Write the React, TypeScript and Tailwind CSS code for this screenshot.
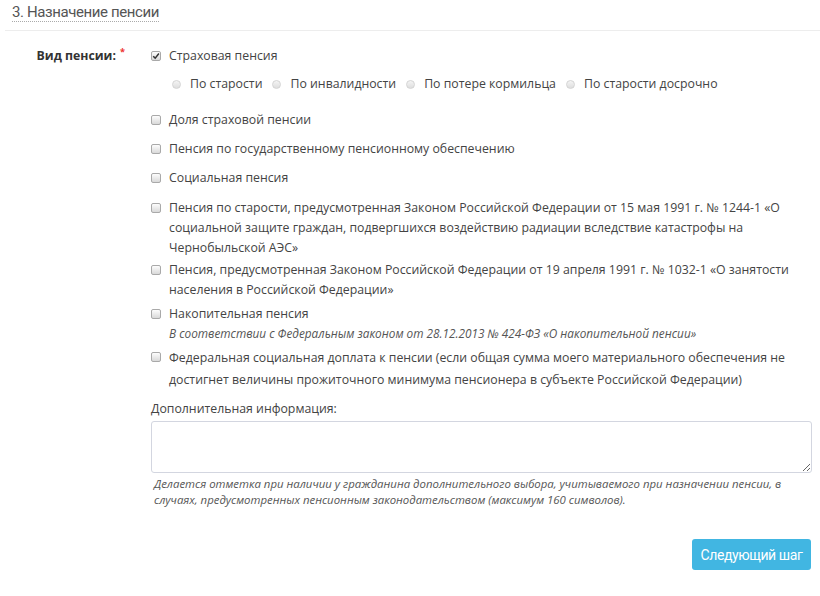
import React from 'react';

function Box({ checked = false }: { checked?: boolean }) {
  return (
    <span className="mt-[5px] flex h-[10px] w-[10px] shrink-0 items-center justify-center rounded-[2px] border border-[#a9a9a9] bg-gradient-to-b from-[#fdfdfd] to-[#d9d9d9]">
      {checked && (
        <svg viewBox="0 0 10 10" className="h-[8px] w-[8px]">
          <path d="M1.5 5.2 L4 7.6 L8.6 1.8" fill="none" stroke="#333" strokeWidth="1.8" />
        </svg>
      )}
    </span>
  );
}

function Radio({ label }: { label: string }) {
  return (
    <span className="flex items-center">
      <span className="mr-[9px] h-[9px] w-[9px] rounded-full border border-[#d4d4d4] bg-gradient-to-b from-[#f4f4f4] to-[#dedede]" />
      <span>{label}</span>
    </span>
  );
}

function Option({ children, note, className = '' }: { children: React.ReactNode; note?: string; className?: string }) {
  return (
    <label className={`flex gap-[8px] ${className}`}>
      <Box />
      <span>
        <span className="block">{children}</span>
        {note && <span className="block text-[11.8px] italic leading-[18px] text-[#555]">{note}</span>}
      </span>
    </label>
  );
}

export default function App() {
  return (
    <div className="h-[596px] w-[820px] overflow-hidden bg-white font-['Open_Sans',sans-serif] text-[12.3px] leading-[20px] text-[#444]">
      <div className="ml-[5px] border-b border-[#ededed] pb-[7px] pl-[7px] pt-[3px]">
        <h2 className="inline-block border-b border-dotted border-[#aaa] font-['Roboto',sans-serif] text-[15px] leading-[18px] tracking-[-0.4px] text-[#555]">
          3. Назначение пенсии
        </h2>
      </div>

      <div className="mt-[15px] flex">
        <div className="w-[125px] shrink-0 text-right font-bold text-[#333]">
          Вид пенсии:<sup className="ml-[4px] text-[#e33]">*</sup>
        </div>
        <div className="ml-[26px] w-[660px]">
          <label className="flex gap-[8px] text-[#444]">
            <Box checked />
            <span>Страховая пенсия</span>
          </label>
          <div className="mt-[8px] flex gap-[10px] pl-[21px]">
            <Radio label="По старости" />
            <Radio label="По инвалидности" />
            <Radio label="По потере кормильца" />
            <Radio label="По старости досрочно" />
          </div>

          <div className="mt-[16px] flex flex-col">
            <Option>Доля страховой пенсии</Option>
            <Option className="mt-[9px]">Пенсия по государственному пенсионному обеспечению</Option>
            <Option className="mt-[9px]">Социальная пенсия</Option>
            <Option className="mt-[10px]">
              Пенсия по старости, предусмотренная Законом Российской Федерации от 15 мая 1991 г. № 1244-1 «О
              социальной защите граждан, подвергшихся воздействию радиации вследствие катастрофы на
              Чернобыльской АЭС»
            </Option>
            <Option className="mt-[2px]">
              Пенсия, предусмотренная Законом Российской Федерации от 19 апреля 1991 г. № 1032-1 «О занятости
              населения в Российской Федерации»
            </Option>
            <Option
              className="mt-[4px]"
              note="В соответствии с Федеральным законом от 28.12.2013 № 424-ФЗ «О накопительной пенсии»"
            >
              Накопительная пенсия
            </Option>
            <Option className="mt-[5px] leading-[22px]">
              Федеральная социальная доплата к пенсии (если общая сумма моего материального обеспечения не
              достигнет величины прожиточного минимума пенсионера в субъекте Российской Федерации)
            </Option>
          </div>

          <div className="mt-[8px]">Дополнительная информация:</div>
          <textarea className="mt-[2px] block h-[52px] w-[661px] resize-y rounded-[3px] border border-[#d3d6e0] bg-white" />
          <p className="mt-[3px] pl-[3px] text-[11.4px] italic leading-[16px] text-[#555]">
            Делается отметка при наличии у гражданина дополнительного выбора, учитываемого при назначении пенсии, в
            <br />
            случаях, предусмотренных пенсионным законодательством (максимум 160 символов).
          </p>

          <div className="mt-[31px] flex justify-end">
            <button className="h-[31px] w-[119px] rounded-[3px] bg-[#41b6e2] font-['Roboto',sans-serif] text-[14px] tracking-[-0.4px] text-white">
              Следующий шаг
            </button>
          </div>
        </div>
      </div>
    </div>
  );
}
